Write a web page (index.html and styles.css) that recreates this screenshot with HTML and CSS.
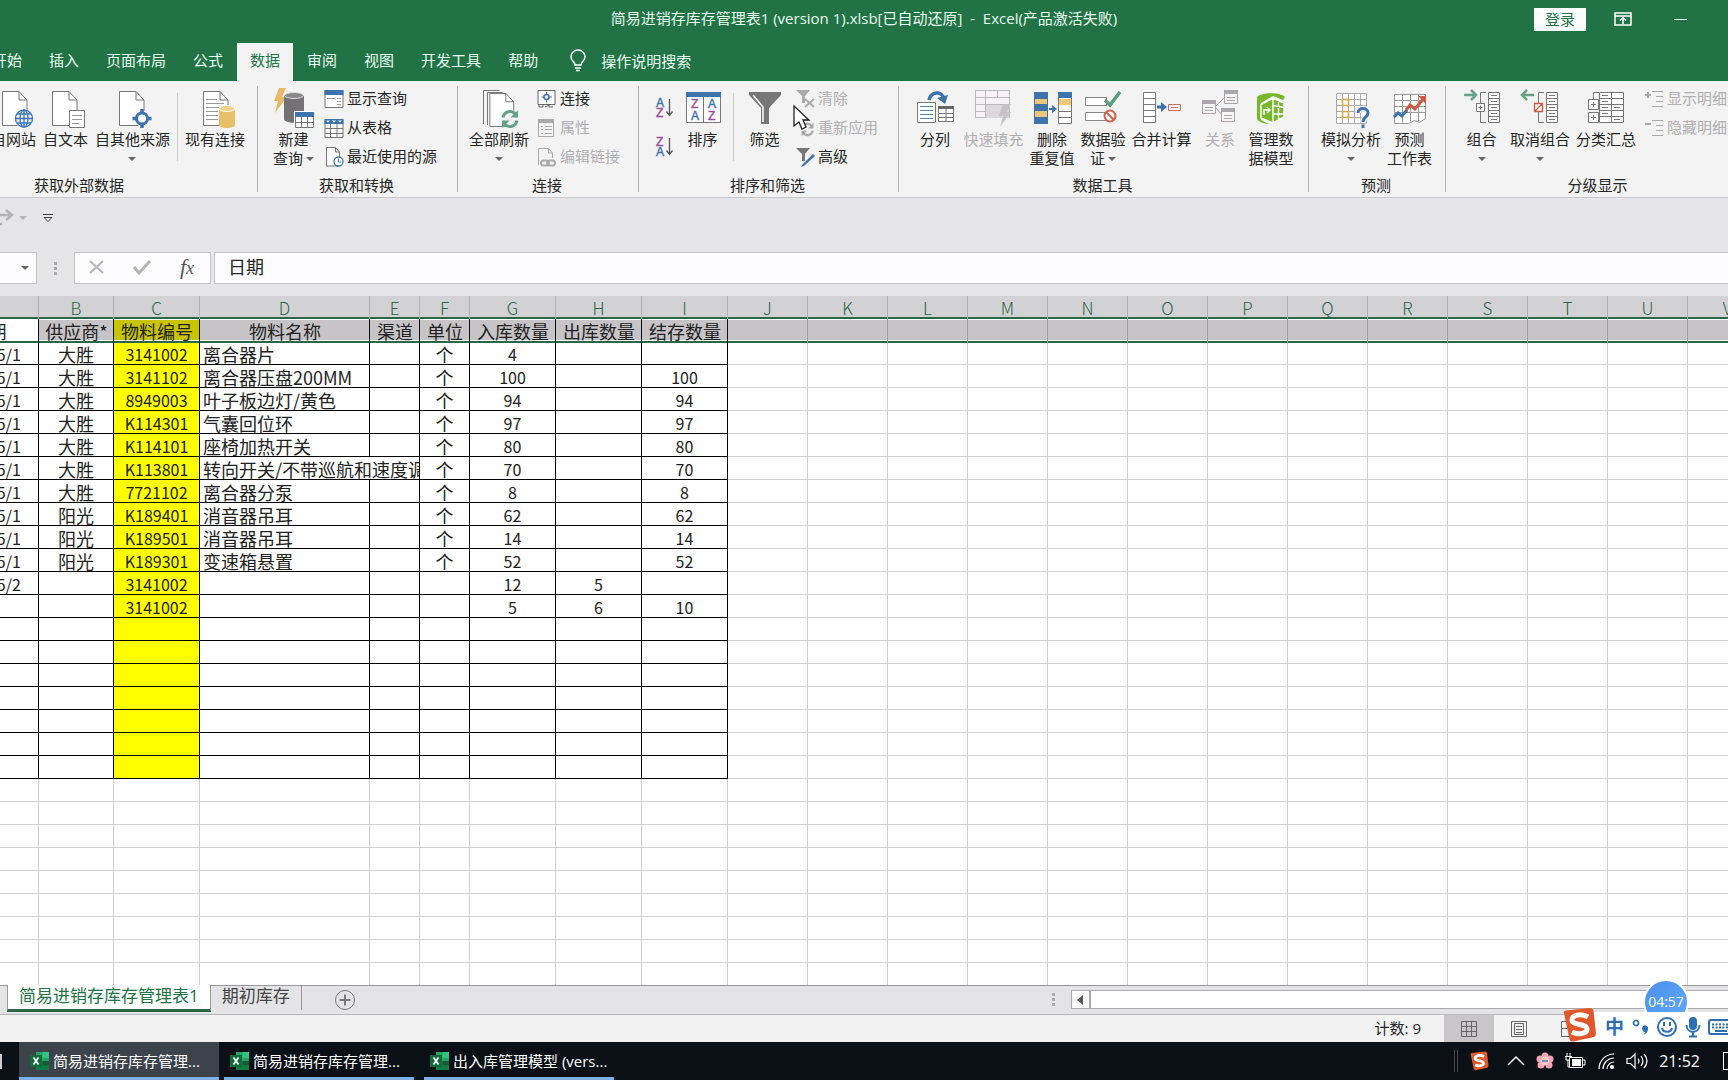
FILE: index.html
```html
<!DOCTYPE html>
<html lang="zh-CN">
<head>
<meta charset="utf-8">
<title>简易进销存库存管理表1 - Excel</title>
<link rel="stylesheet" href="styles.css">
</head>
<body>
<svg class="defs" aria-hidden="true">
  <symbol id="doc" viewBox="0 0 26 35"><path d="M.5.5H17L25 9V34.500H.5Z" fill="#fff" stroke="#777"/><path d="M17 .5V9H25" fill="none" stroke="#777"/></symbol>
  <symbol id="cycle" viewBox="0 0 20 20"><path d="M3 8.500A7.200 7.200 0 0 1 15.500 5M17 11.500A7.200 7.200 0 0 1 4.500 15" fill="none" stroke="currentColor" stroke-width="3"/><path d="M18 1V8.500H10.500ZM2 19V11.500H9.500Z" fill="currentColor"/></symbol>
  <symbol id="sogou" viewBox="0 0 36 34"><path d="M3 5 Q2 3 5 2.500L29 0Q32 0 32.500 3L35 25Q35 28 33 29L12 33.500Q9 34 8.500 31Z" fill="#e2582c"/><path d="M27 9C20 5 11 7 11 12c0 6 15 3 15 9 0 5-9 6-15 3" fill="none" stroke="#fff" stroke-width="5"/></symbol>
  <symbol id="xl" viewBox="0 0 20 20"><path d="M6 1h13v18H6z" fill="#21a366"/><path d="M12.500 1H19v6h-6.500z" fill="#33c481"/><path d="M6 10h13v9H6z" fill="#107c41"/><path d="M12.500 10H19v4.500h-6.500z" fill="#185c37"/><path d="M0 4h12v12H0z" fill="#0f6b39"/><path d="M3.500 6.500l5 7M8.500 6.500l-5 7" stroke="#fff" stroke-width="1.700"/></symbol>
</svg>

<header class="titlebar">
  <span class="spacer"></span>
  <h1 class="title">简易进销存库存管理表1 (version 1).xlsb[已自动还原]&nbsp; -&nbsp; Excel(产品激活失败)</h1>
  <div class="wincontrols">
    <button class="login">登录</button>
    <button class="winbtn" aria-label="功能区显示选项"><svg width="18" height="14"><path d="M1 1h16v12H1zM1 4h16" fill="none" stroke="#fff" stroke-width="1.500"/><path d="M9 12V6M6 8.500l3-3 3 3" fill="none" stroke="#fff" stroke-width="1.500"/></svg></button>
    <button class="winbtn" aria-label="最小化"><svg width="14" height="14"><path d="M0 7.500h13" stroke="#fff"/></svg></button>
  </div>
</header>

<nav class="tabs">
  <button class="tab">开始</button><button class="tab">插入</button><button class="tab">页面布局</button><button class="tab">公式</button><button class="tab active">数据</button><button class="tab">审阅</button><button class="tab">视图</button><button class="tab">开发工具</button><button class="tab">帮助</button>
  <button class="tellme"><svg width="16" height="22" fill="none" stroke="#fff" stroke-width="1.500"><path d="M5 15c0-3-4-4-4-8a7 7 0 0 1 14 0c0 4-4 5-4 8zM5 18h6M6 20.500h4"/></svg>操作说明搜索</button>
</nav>

<section class="ribbon">
  <div class="group g-ext">
    <div class="tools">
      <button class="big"><svg class="ico" viewBox="0 0 40 40"><use href="#doc" x="9" y="3" width="26" height="35"/><circle cx="31" cy="30.500" r="9.500" fill="#f3f3f3"/><g fill="none" stroke="#3e78b2" stroke-width="1.300"><circle cx="31" cy="30.500" r="8.500"/><ellipse cx="31" cy="30.500" rx="4" ry="8.500"/><path d="M31 22v17M22.500 30.500h17M24 26h14M24 35h14"/></g></svg>自网站</button>
      <button class="big"><svg class="ico" viewBox="0 0 40 40"><use href="#doc" x="7" y="3" width="26" height="35"/><path d="M24.500 22.500h15v17h-15z" fill="#fff" stroke="#777"/><path d="M27 27.500h10M27 31.500h10M27 35.500h7" stroke="#999"/></svg>自文本</button>
      <button class="big"><svg class="ico" viewBox="0 0 40 40"><use href="#doc" x="7" y="3" width="26" height="35"/><circle cx="30" cy="30.500" r="8" fill="#f3f3f3"/><circle cx="30" cy="30.500" r="5.500" fill="#fff" stroke="#3e73ad" stroke-width="3"/><path d="M30 21v4M30 36v4M20.500 30.500h4M35.500 30.500h4" stroke="#3e73ad" stroke-width="3.500"/></svg>自其他来源<i class="caret"></i></button>
      <span class="rule"></span>
      <button class="big"><svg class="ico" viewBox="0 0 40 40"><use href="#doc" x="8" y="3" width="26" height="35"/><path d="M11 11.500h11M11 15.500h18M11 19.500h13M11 23.500h12M11 27.500h12M11 31.500h12" stroke="#999"/><path d="M24 21v16c0 4 16 4 16 0V21z" fill="#e8c068"/><ellipse cx="32" cy="20.500" rx="8" ry="3" fill="#eed086" stroke="#fff"/></svg>现有连接</button>
    </div>
    <h2 class="gtitle">获取外部数据</h2>
  </div>

  <div class="group g-get">
    <div class="tools">
      <button class="big"><svg class="ico" viewBox="0 0 40 40"><path d="M5 0h7L8 9h5L1 25l3-12H0z" fill="#eab968"/><path d="M10 8v23c0 5 20 5 20 0V8z" fill="#737173"/><ellipse cx="20" cy="7.500" rx="9.500" ry="3" fill="#8a888a" stroke="#ddd"/><path d="M20 23h20v17H20z" fill="#fff"/><path d="M21.500 24.500h18v15h-18zM21.500 34.500h18M27.500 28v11M33.500 28v11" fill="none" stroke="#777"/><path d="M21 24h19v5H21z" fill="#3e73ad"/></svg>新建<span>查询<i class="caret in"></i></span></button>
      <ul class="small">
        <li><button><svg viewBox="0 0 20 20"><path d="M1 1.500h18v17H1z" fill="#fff" stroke="#777"/><path d="M.5 1h19v5H.5z" fill="#3e73ad"/><path d="M3 9.500h8M13 9.500h4M13 12.500h4M13 15.500h4" stroke="#999"/></svg>显示查询</button></li>
        <li><button><svg viewBox="0 0 20 20"><path d="M1 1.500h18v18H1zM1 10.500h18M1 15.500h18M6.500 6v13M13 6v13" fill="#fff" stroke="#777"/><path d="M.5 1h19v5H.5z" fill="#3e73ad"/><path d="M2 2.500h4l-2 2zM8 2.500h4l-2 2zM14 2.500h4l-2 2z" fill="#fff"/></svg>从表格</button></li>
        <li><button><svg viewBox="0 0 20 20"><path d="M2.500.5h9l4 4.500v14h-13zM11.500.5V5h4" fill="#fff" stroke="#777"/><circle cx="14.500" cy="14.500" r="4.500" fill="#fff" stroke="#3e73ad" stroke-width="1.300"/><path d="M14.500 11.500v3.500h2.500" fill="none" stroke="#3e73ad"/></svg>最近使用的源</button></li>
      </ul>
    </div>
    <h2 class="gtitle">获取和转换</h2>
  </div>

  <div class="group g-conn">
    <div class="tools">
      <button class="big"><svg class="ico" viewBox="0 0 40 40"><path d="M4.500 36V2.500h16M8.500 37V4.500h15" fill="none" stroke="#777"/><use href="#doc" x="10" y="5" width="26" height="34"/><circle cx="31" cy="30.500" r="9" fill="#f3f3f3"/><use href="#cycle" x="21" y="21" width="20" height="20" color="#65a288"/></svg>全部刷新<i class="caret"></i></button>
      <ul class="small">
        <li><button><svg viewBox="0 0 20 20"><path d="M1 1.500h17v14H1z" fill="#fff" stroke="#666"/><circle cx="9.500" cy="8" r="2.500" fill="none" stroke="#3e73ad" stroke-width="1.500"/><path d="M9.500 3v2.500M9.500 10.500v3M4.500 8H7M12 8h3" fill="none" stroke="#3e73ad"/><path d="M2 16v2h4v-2M8 18l4-2v2h4" fill="none" stroke="#666"/></svg>连接</button></li>
        <li><button disabled><svg viewBox="0 0 20 20"><path d="M1.500 1.500h15v17h-15z" fill="#f5f5f5" stroke="#aaa"/><path d="M1 1h16v4H1z" fill="#aaa"/><path d="M4 8.500h2M4 11.500h2M4 15.500h2M8 8.500h7M8 11.500h7M8 15.500h7" stroke="#aaa"/></svg>属性</button></li>
        <li><button disabled><svg viewBox="0 0 20 20" fill="none" stroke="#aaa"><path d="M1.500 18V1.500h10l4 4.500v5M11.500 1.500V6h4"/><rect x="4" y="13.500" width="8" height="5" rx="2.500" stroke-width="2"/><rect x="10" y="13.500" width="8" height="5" rx="2.500" stroke-width="2"/></svg>编辑链接</button></li>
      </ul>
    </div>
    <h2 class="gtitle">连接</h2>
  </div>

  <div class="group g-sort">
    <div class="tools">
      <div class="sorts">
        <button aria-label="升序"><svg width="18" height="22"><text class="az b" x="0" y="10">A</text><text class="az p" x="0" y="20">Z</text><path d="M13.500 2v16M10.500 14.500l3 4 3-4" fill="none" stroke="#555" stroke-width="1.300"/></svg></button>
        <button aria-label="降序"><svg width="18" height="22"><text class="az p" x="0" y="10">Z</text><text class="az b" x="0" y="20">A</text><path d="M13.500 2v16M10.500 14.500l3 4 3-4" fill="none" stroke="#555" stroke-width="1.300"/></svg></button>
      </div>
      <button class="big"><svg class="ico" viewBox="0 0 40 40"><path d="M3.500 4.500h34v30h-34zM20.500 9v26" fill="#fff" stroke="#777"/><path d="M3 4h35v5H3z" fill="#3e73ad"/><text class="az p" x="8" y="20">Z</text><text class="az b" x="8" y="32">A</text><text class="az b" x="25" y="20">A</text><text class="az p" x="25" y="32">Z</text></svg>排序</button>
      <span class="rule"></span>
      <button class="big"><svg class="ico" viewBox="0 0 40 40"><path d="M4 4h32v3L24 20v16h-8V20L4 7z" fill="#777"/><path d="M8 7l10 12v15" fill="none" stroke="#fff" stroke-width="1.500"/></svg>筛选</button>
      <ul class="small">
        <li><button disabled><svg viewBox="0 0 20 20"><path d="M1 1h14l-5 6v7H7V7z" fill="#aaa"/><path d="M10 10l9 8M19 10l-9 8" stroke="#aaa" stroke-width="2"/></svg>清除</button></li>
        <li><button disabled><svg viewBox="0 0 20 20"><use href="#cycle" x="5" y="4" width="15" height="15" color="#aaa"/></svg>重新应用</button></li>
        <li><button><svg viewBox="0 0 20 20"><path d="M1 1h14l-5 6v7H7V7z" fill="#777"/><path d="M18 7l-10 10-2 3 3.500-1.500L20 9z" fill="#3e73ad"/></svg>高级</button></li>
      </ul>
    </div>
    <h2 class="gtitle">排序和筛选</h2>
    <svg class="cursor" width="18" height="26"><path d="M1 1v20l5-4 3 7 4-2-3-7h6z" fill="#fff" stroke="#222" stroke-width="1.300"/></svg>
  </div>

  <div class="group g-data">
    <div class="tools">
      <button class="big"><svg class="ico" viewBox="0 0 40 40"><path d="M2.500 14.500h18v20h-18z" fill="#fff" stroke="#777"/><path d="M5 18.500h13M5 22.500h13M5 26.500h13M5 30.500h13" stroke="#4d86a8"/><path d="M23.500 18.500h15v15h-15zM31 18v15M23.500 25.500h15M23.500 29.500h15" fill="#fff" stroke="#777"/><path d="M23 18h16v3H23z" fill="#666"/><path d="M14 12C16 3 27 3 28.500 10" fill="none" stroke="#3e73ad" stroke-width="3.500"/><path d="M22 10l11-3-3 9z" fill="#3e73ad"/></svg>分列</button>
      <button class="big" disabled><svg class="ico" viewBox="0 0 40 40"><path d="M2.500 2.500h34v27h-34zM2.500 9.500h34M2.500 16.500h34M2.500 23.500h34M12.500 2.500v27M24.500 2.500v7" fill="#f6f2f6" stroke="#bdb8bd"/><path d="M13 17h23v13H13z" fill="#dcd8dc"/><path d="M30 16h8l-4 8h4L27 39l3-11h-4z" fill="#c6c2c6"/></svg>快速填充</button>
      <button class="big"><svg class="ico" viewBox="0 0 40 40"><path d="M2 4h14v32H2z" fill="#3e73ad"/><path d="M3 11h12v5H3zM3 23h12v6H3z" fill="#ecc778"/><path d="M26.500 4.500h13v31h-13zM26.500 23.500h13M26.500 29.500h13" fill="#fff" stroke="#777"/><path d="M26 4h14v6H26z" fill="#3e73ad"/><path d="M27 11h12v6H27z" fill="#ecc778"/><path d="M17 21h5" stroke="#3e73ad" stroke-width="2"/><path d="M20 17l5 4-5 4z" fill="#3e73ad"/></svg>删除<span>重复值</span></button>
      <button class="big"><svg class="ico" viewBox="0 0 40 40"><path d="M2.500 9.500h21v8h-21zM2.500 24.500h21v8h-21z" fill="#fff" stroke="#888"/><path d="M22 12l5 5 10-13" fill="none" stroke="#5c9c80" stroke-width="3.500"/><circle cx="27" cy="28" r="5.500" fill="#f3f3f3" stroke="#cb6152" stroke-width="2"/><path d="M23 24l8 8" stroke="#cb6152" stroke-width="2"/></svg>数据验<span>证<i class="caret in"></i></span></button>
      <button class="big"><svg class="ico" viewBox="0 0 40 40"><path d="M1.500 4.500h12v30h-12zM1.500 10.500h12M1.500 16.500h12M1.500 22.500h12M1.500 28.500h12" fill="#fff" stroke="#777"/><path d="M15 19h6" stroke="#3e73ad" stroke-width="3"/><path d="M19 14l6 5-6 5z" fill="#3e73ad"/><path d="M26.500 16.500h12v6h-12zM29 19.500h7" fill="#fff" stroke="#cb6f62"/></svg>合并计算</button>
      <button class="big" disabled><svg class="ico" viewBox="0 0 40 40"><path d="M16 18l8-8M16 20l6 7" stroke="#aaa"/><g fill="#f8f4f8" stroke="#aaa6aa"><path d="M2.500 12.500h13v13h-13zM24.500 2.500h13v13h-13zM21.500 20.500h13v13h-13zM5 19.500h8M5 22.500h8M27 9.500h8M27 12.500h8M24 27.500h8M24 30.500h8"/></g><path d="M2 12h14v4H2zM24 2h14v4H24zM21 20h14v4H21z" fill="#aaa6aa"/></svg>关系</button>
      <button class="big"><svg class="ico" viewBox="0 0 40 40"><path d="M6 9c5-5 23-5 28 0l-2 3-10-4-12 7v17l8 4c-6 0-11-3-12-5z" fill="#76b82a"/><path d="M10 16l12-6 11 5v14l-11 6-12-5z" fill="#76b82a"/><path d="M10 16.500l12-6.500 11 5v14l-11 6-12-5zM22 10v25M27.500 12.500v19.500M22 17.500l11 2M22 26h11M13 27v-5h5M16 19l3 3-3 3" fill="none" stroke="#fff" stroke-width="1.500"/></svg>管理数<span>据模型</span></button>
    </div>
    <h2 class="gtitle">数据工具</h2>
  </div>

  <div class="group g-fore">
    <div class="tools">
      <button class="big"><svg class="ico" viewBox="0 0 40 40"><path d="M5.500 5.500h30v30h-30zM5.500 11.500h30M5.500 17.500h30M5.500 23.500h30M5.500 29.500h30M11.500 5.500v30M17.500 5.500v30M23.500 5.500v30M29.500 5.500v30" fill="#fff" stroke="#aaa"/><path d="M11.500 11.500h6v6h-6zM11.500 23.500h6v6h-6z" fill="none" stroke="#dba744" stroke-width="1.500"/><path d="M27 25c0-6 10-6 10 0 0 4-5 4-5 9M32 36.500v3.500" fill="none" stroke="#f3f3f3" stroke-width="6"/><path d="M27 25c0-6 10-6 10 0 0 4-5 4-5 9M32 36.500v3.500" fill="none" stroke="#3e73ad" stroke-width="3"/></svg>模拟分析<i class="caret"></i></button>
      <button class="big"><svg class="ico" viewBox="0 0 40 40"><path d="M4.500 6.500h31v24l-6 4-5-2-6 3H4.500zM4.500 12.500h31M4.500 18.500h31M4.500 24.500h31M12.500 6.500v28M20.500 6.500v27M28.500 6.500v27" fill="#fff" stroke="#999"/><path d="M4 29l4-4 4 3 5-6" fill="none" stroke="#3e73ad" stroke-width="3"/><path d="M16 22l4-5 5 4 9-11" fill="none" stroke="#d05a42" stroke-width="3"/><path d="M28 8h8v8z" fill="#d05a42"/></svg>预测<span>工作表</span></button>
    </div>
    <h2 class="gtitle">预测</h2>
  </div>

  <div class="group g-outline">
    <div class="tools">
      <button class="big"><svg class="ico" viewBox="0 0 40 40"><path d="M26.500 4.500h11v30h-11z" fill="#fff"/><path d="M26.500 4.500h11v30h-11zM26.500 10.500h11M26.500 16.500h11M26.500 22.500h11M26.500 28.500h11M29 7.500h6M29 13.500h6M29 19.500h6M29 25.500h6M29 31.500h6M24 4.500h-5.500v11M18.500 24v10.500H24" fill="none" stroke="#777"/><path d="M14.500 15.500h8v8h-8zM16.500 19.500h4M18.500 17.500v4" fill="#fff" stroke="#777"/><path d="M2 7h11M9 2l5 5-5 5" fill="none" stroke="#65a288" stroke-width="2.500"/></svg>组合<i class="caret"></i></button>
      <button class="big"><svg class="ico" viewBox="0 0 40 40"><path d="M26.500 4.500h11v30h-11z" fill="#fff"/><path d="M26.500 4.500h11v30h-11zM26.500 10.500h11M26.500 16.500h11M26.500 22.500h11M26.500 28.500h11M29 7.500h6M29 13.500h6M29 19.500h6M29 25.500h6M29 31.500h6M24 4.500h-5.500v11M18.500 24v10.500H24" fill="none" stroke="#777"/><path d="M14.500 15.500h8v8h-8zM15 23l7-7" fill="#fff" stroke="#d05a42" stroke-width="1.300"/><path d="M3 7h11M7 2L2 7l5 5" fill="none" stroke="#65a288" stroke-width="2.500"/></svg>取消组合<i class="caret"></i></button>
      <button class="big"><svg class="ico" viewBox="0 0 40 40"><path d="M13.500 4.500h24v30h-24zM13.500 10.500h24M13.500 16.500h24M13.500 22.500h24M13.500 28.500h24M25.500 4.500v30M16 7.500h6M16 13.500h6M16 19.500h6M16 25.500h6M28 19.500h6M28 31.500h6M13 4.500H7.500v7" fill="#fff" stroke="#777"/><path d="M2.500 11.500h10v10h-10zM2.500 24.500h10v10h-10zM5 16.500h5M7.500 14v5M5 29.500h5M7.500 27v5" fill="#fff" stroke="#777"/></svg>分类汇总</button>
      <ul class="small">
        <li><button disabled><svg viewBox="0 0 20 20"><path d="M1 6h6M4 3v6" stroke="#aaa" stroke-width="2"/><path d="M8 2.500h11M12 7.500h7M12 12.500h7M8 17.500h11" stroke="#aaa"/></svg>显示明细数据</button></li>
        <li><button disabled><svg viewBox="0 0 20 20"><path d="M1 6h6" stroke="#aaa" stroke-width="2"/><path d="M8 2.500h11M12 7.500h7M12 12.500h7M8 17.500h11" stroke="#aaa"/></svg>隐藏明细数据</button></li>
      </ul>
    </div>
    <h2 class="gtitle">分级显示</h2>
  </div>
</section>

<div class="qat">
  <button aria-label="恢复"><svg width="14" height="18"><path d="M0 6h10M6 1l6 5-6 5M0 15h2" fill="none" stroke="#b3b3b5" stroke-width="2.500"/></svg></button>
  <button aria-label="恢复选项"><i class="caret pale"></i></button>
  <button aria-label="自定义快速访问工具栏"><svg width="10" height="10" fill="none" stroke="#444"><path d="M0 1.500h10M1 4.500l4 4 4-4z"/></svg></button>
</div>

<div class="formula">
  <div class="namebox"><input aria-label="名称框" value=""><button aria-label="名称列表"><i class="caret"></i></button></div>
  <span class="grip"></span>
  <div class="fxbox">
    <button aria-label="取消"><svg width="16" height="16"><path d="M1 2l13 12M14 2L1 14" stroke="#b5b5b5" stroke-width="2"/></svg></button>
    <button aria-label="输入"><svg width="18" height="16"><path d="M1 8l5 6L17 2" fill="none" stroke="#b5b5b5" stroke-width="3"/></svg></button>
    <button class="fx" aria-label="插入函数">f<small>x</small></button>
  </div>
  <input class="finput" aria-label="编辑栏" value="日期">
</div>

<main class="sheet"><table class="grid" id="grid"></table></main>

<div class="sheetbar">
  <button class="stab active">简易进销存库存管理表1</button>
  <button class="stab">期初库存</button>
  <button class="addsheet" aria-label="新工作表"><svg width="22" height="22" fill="none" stroke="#777"><circle cx="11" cy="11" r="9.500"/><path d="M5.500 11h11M11 5.500v11" stroke-width="2"/></svg></button>
  <span class="grip"></span>
  <div class="hscroll"><button aria-label="向左滚动"><svg width="6" height="10"><path d="M6 0v10L0 5z" fill="#555"/></svg></button></div>
</div>

<footer class="status">
  <span class="count">计数: 9</span>
  <button class="view on" aria-label="普通"><svg width="18" height="18"><path d="M1.500 1.500h15v15h-15zM6.500 1.500v15M11.500 1.500v15M1.500 6.500h15M1.500 11.500h15" fill="none" stroke="#666"/></svg></button>
  <button class="view" aria-label="页面布局"><svg width="18" height="18"><path d="M1.500 1.500h15v15h-15zM4.500 3.500h9v11h-9zM6 6.500h6M6 9.500h6M6 12.500h6" fill="none" stroke="#666"/></svg></button>
  <button class="view" aria-label="分页预览"><svg width="18" height="18"><path d="M1.500 1.500h15v15h-15zM1.500 8.500h9v8" fill="none" stroke="#666"/></svg></button>
</footer>

<div class="timer">04:57</div>
<div class="ime">
  <svg class="imelogo" width="36" height="34"><use href="#sogou"/></svg>
  <button>中</button>
  <button aria-label="标点"><svg width="18" height="20"><circle cx="5" cy="6" r="2.500" fill="none" stroke="#2d6fb0" stroke-width="1.700"/><path d="M11 11a3 3 0 0 1 6 1c0 3-2 5-5 6 1-1 2-2 2-3-2 0-3-2-3-4z" fill="#2d6fb0"/></svg></button>
  <button aria-label="表情"><svg width="22" height="22" fill="none" stroke="#2d6fb0" stroke-width="2"><circle cx="11" cy="11" r="9"/><path d="M8 6v4M14 6v4M6 12c1 5 9 5 10 0"/></svg></button>
  <button aria-label="语音"><svg width="16" height="22"><rect x="4" y="1" width="8" height="13" rx="4" fill="#2d6fb0"/><path d="M1.500 9c0 9 13 9 13 0M8 16v4M4 20.500h8" fill="none" stroke="#2d6fb0" stroke-width="2"/></svg></button>
  <button aria-label="键盘"><svg width="26" height="16"><rect x="1" y="1" width="24" height="14" rx="2" fill="none" stroke="#2d6fb0" stroke-width="2"/><path d="M4 5.500h18M4 8.500h18" stroke="#2d6fb0" stroke-width="2" stroke-dasharray="2 1.500"/><path d="M7 12h12" stroke="#2d6fb0" stroke-width="2"/></svg></button>
</div>

<div class="taskbar">
  <span class="tview"></span>
  <button class="task on"><svg width="20" height="20"><use href="#xl"/></svg>简易进销存库存管理...</button>
  <button class="task"><svg width="20" height="20"><use href="#xl"/></svg>简易进销存库存管理...</button>
  <button class="task"><svg width="20" height="20"><use href="#xl"/></svg>出入库管理模型 (vers...</button>
  <div class="tray">
    <span class="tsep"></span>
    <svg class="traylogo" width="20" height="20"><use href="#sogou"/></svg>
    <svg width="18" height="12"><path d="M1 10l8-8 8 8" fill="none" stroke="#fff" stroke-width="1.500"/></svg>
    <svg width="18" height="18"><g fill="#f3a6b4"><circle cx="9" cy="4" r="3.500"/><circle cx="4" cy="7" r="3.500"/><circle cx="14" cy="7" r="3.500"/><circle cx="5" cy="13" r="3.500"/><circle cx="13" cy="13" r="3.500"/></g><circle cx="9" cy="9" r="4.500" fill="#f8c9cf"/><path d="M6 9h6" stroke="#7893b0" stroke-width="2"/></svg>
    <svg width="21" height="16"><path d="M4.500 4.500h13v10h-13zM18 7h2v5h-2M2 0v3M5 0v3M0 3.500h7M1 4v3h4M3 7v7h2" fill="none" stroke="#fff"/><path d="M7 6h9v7H7z" fill="#fff"/></svg>
    <svg width="18" height="18" fill="none" stroke="#fff" stroke-width="1.200"><path d="M2 17A15 15 0 0 1 17 2M6 17A11 11 0 0 1 17 6M10 17a7 7 0 0 1 7-7"/><circle cx="15" cy="15" r="1.500" fill="#fff"/></svg>
    <svg width="22" height="18" fill="none" stroke="#fff" stroke-width="1.200"><path d="M1 6.500h3.500L9 2v14l-4.500-4.500H1zM12 6.500q2 2.500 0 5M15 4q4 5 0 10M18 2q6 7 0 14"/></svg>
    <time>21:52</time>
    <span class="notif"></span>
  </div>
</div>
<script src="app.js"></script>
</body>
</html>
```
FILE: styles.css
```css
* { box-sizing: border-box; }
body {
  margin: 0; height: 100vh; min-height: 720px; overflow: hidden; position: relative;
  display: flex; flex-direction: column;
  font: 15px/19px "Open Sans", "Noto Sans CJK SC", sans-serif; color: #262626; background: #e6e6e8;
}
button, input { font: inherit; color: inherit; border: 0; padding: 0; background: none; }
button { white-space: nowrap; }
h1, h2, ul { margin: 0; padding: 0; font: inherit; list-style: none; }
svg { display: block; flex: none; overflow: visible; }
.defs { position: absolute; width: 0; height: 0; }

.titlebar { flex: none; height: 43px; background: #217346; color: #e8fbee; display: grid; grid-template-columns: 1fr auto 1fr; }
.title { line-height: 36px; white-space: pre; }
.wincontrols { display: flex; justify-content: flex-end; align-items: center; height: 38px; padding-right: 40px; }
.login { width: 52px; height: 23px; background: #fff; color: #217346; }
.winbtn { margin-left: 28px; }
.winbtn:last-child { margin-left: 42px; }

.tabs { flex: none; height: 38px; background: #217346; display: flex; gap: 1px; margin-left: -21px; color: #e8fbee; }
.tab { flex: none; padding: 0 13px 3px; }
.tab.active { background: #f3f3f3; color: #217346; }
.tellme { display: flex; align-items: center; gap: 15px; margin-left: 18px; padding-bottom: 2px; }

.ribbon { flex: none; height: 117px; background: #f3f3f3; border-bottom: 1px solid #c9c9cb; display: flex; overflow: hidden; }
.group { flex: none; position: relative; padding-top: 7px; display: flex; flex-direction: column; }
.group::after { content: ""; position: absolute; right: 0; top: 5px; bottom: 5px; width: 1px; background: #b4b4b6; }
.tools { display: flex; gap: 6px; height: 88px; align-items: flex-start; }
.gtitle { text-align: center; padding-right: 3px; }
.g-ext { width: 355px; margin-left: -97px; }
.g-ext .tools { justify-content: flex-end; gap: 7px; padding-right: 13px; }
.g-get { width: 200px; }
.g-get .tools { padding-left: 13px; }
.g-conn { width: 181px; }
.g-conn .tools { padding-left: 11px; }
.g-sort { width: 260px; }
.g-sort .tools { padding-left: 17px; gap: 8px; }
.g-data { width: 410px; }
.g-fore { width: 137px; }
.g-data .tools, .g-fore .tools { justify-content: center; padding-right: 2px; }
.g-outline { width: 306px; }
.g-outline .tools { padding-left: 13px; }
.big { flex: none; min-width: 45px; display: flex; flex-direction: column; align-items: center; line-height: 19px; }
.ico { width: 40px; height: 40px; margin-bottom: 2px; }
.big > span { display: flex; align-items: center; gap: 3px; }
.caret { width: 0; height: 0; border: 4px solid transparent; border-top-color: #666; border-bottom: 0; }
.big > .caret { margin-top: 8px; }
.pale { display: block; border-top-color: #b5b5b7; }
button:disabled { color: #b1afb1; }
.rule { width: 1px; height: 68px; margin-top: 5px; background: #cdcdcf; }
.small { margin-left: 2px; margin-top: -4px; }
.g-sort .small { margin-left: 0; }
.small button { display: flex; align-items: center; gap: 3px; height: 29px; }
.small svg { width: 20px; height: 20px; }
.sorts { display: flex; flex-direction: column; gap: 17px; padding-top: 9px; width: 16px; }
.az { font: 12px "Liberation Sans", sans-serif; stroke-width: 0.4px; }
.b { fill: #3e73ad; stroke: #3e73ad; }
.p { fill: #9a4f9e; stroke: #9a4f9e; }
.cursor { position: absolute; left: 154px; top: 24px; }

.qat { flex: none; height: 54px; display: flex; align-items: flex-start; padding-top: 15px; }
.qat button { height: 10px; display: flex; align-items: center; }
.qat button + button { margin-left: 5px; }
.qat button:last-child { margin-left: 16px; }

.formula { flex: none; height: 44px; display: flex; align-items: flex-start; }
.namebox, .fxbox, .finput { height: 32px; background: #fdfcfe; border: 1px solid #c4c4c6; }
.namebox { width: 37px; border-left: 0; display: flex; align-items: center; }
.namebox input { width: 21px; }
.namebox .caret { display: block; }
.grip { width: 3px; height: 13px; background: repeating-linear-gradient(#aaa 0 3px, transparent 3px 5px); }
.formula .grip { margin: 10px 17px; }
.fxbox { width: 137px; display: flex; align-items: center; justify-content: space-between; padding: 0 16px 2px 14px; }
.fx { font: italic 22px/28px "Liberation Serif", serif; color: #555; }
.fx small { font-size: 18px; }
.finput { flex: 1; min-width: 0; margin-left: 3px; border-right: 0; padding: 0 13px 4px; font-size: 18px; }

.sheet { flex: 1; min-height: 0; overflow: hidden; background: #fff; }
.grid { table-layout: fixed; width: 100%; border-spacing: 0; margin-left: -62px; font-size: 18px; line-height: 20px; color: #222; font-family: "Noto Sans CJK SC", sans-serif; }
.grid th { height: 23px; padding: 0; background: #d2d1d3; border-right: 1px solid #b0b0b2; box-shadow: inset 0 -2px #2a6647; font-weight: 300; color: #2a6647; font-size: 17px; }
.grid td { height: 23px; padding: 1px 3px 0; border-right: 1px solid #d0d0d0; border-bottom: 1px solid #d0d0d0; text-align: center; white-space: nowrap; overflow: hidden; }
.grid .box { border-color: #000; }
.grid .left { text-align: left; }
.grid .num { font-size: 16px; }
.grid .code { background: #ff0; }
.grid .sel td { height: 24px; padding: 0 0 1px 1px; border-bottom: 0; background: #c6c4c6; box-shadow: inset 0 1px #fff, inset 0 -2px #2a6647, inset 0 -3px #fff; border-right-color: #a2a0a2; line-height: 20px; }
.grid .sel td.box { border-right-color: #111; }
.grid .sel td:first-child { background: #fff; }
.grid .sel .code { background: #c9c400; }
.grid .first td { height: 22px; padding-top: 0; }
.a { width: 101px; }
.w75 { width: 75px; }
.w86 { width: 86px; }
.w170 { width: 170px; }
.w50 { width: 50px; }
.w80 { width: 80px; }

.sheetbar { flex: none; height: 30px; display: flex; align-items: flex-start; background: #e4e4e6; border-top: 1px solid #999; border-bottom: 1px solid #b8b8ba; padding-left: 7px; font-size: 17px; }
.stab { height: 24px; padding: 0 11px 4px; border-right: 1px solid #999; color: #444; line-height: 20px; }
.stab.active { height: 27px; margin-top: -1px; padding-bottom: 3px; background: #fff; color: #217346; border-left: 1px solid #999; border-bottom: 3px solid #2a6647; }
.addsheet { margin: 3px auto 0 32px; }
.sheetbar .grip { margin: 7px 16px 0 0; }
.hscroll { flex: none; width: 38.2%; height: 19px; margin-top: 4px; background: #fff; border: 1px solid #aaa; border-right: 0; }
.hscroll button { display: block; width: 19px; height: 17px; border-right: 2px solid #aaa; padding-left: 5px; }

.status { flex: none; height: 27px; background: #f2f2f2; display: flex; align-items: center; justify-content: flex-end; padding-right: 134px; }
.count { margin-right: 23px; }
.view { width: 50px; height: 27px; display: flex; align-items: center; justify-content: center; }
.view.on { background: #c8c6c8; }

.timer { position: absolute; right: 39px; bottom: 55px; width: 46px; height: 46px; border-radius: 50%; border: 2px solid #fff; background: linear-gradient(135deg, #4a90ee, #62a9fb); color: #fff; text-align: center; line-height: 42px; font-size: 14px; }
.ime { position: absolute; right: 0; bottom: 38px; height: 30px; padding-left: 33px; background: #fff; display: flex; align-items: center; gap: 7px; color: #2d6fb0; font-size: 19px; font-weight: 700; width: 156px; overflow: clip; overflow-clip-margin: 12px; }
.imelogo { position: absolute; left: -11px; top: -4px; }
.taskbar { flex: none; height: 38px; background: #0b1016; color: #fff; display: flex; }
.tview { width: 2px; height: 15px; margin: 12px 17px 0 0; background: #ccc; }
.task { position: relative; width: 200px; padding: 0 11px; display: flex; align-items: center; gap: 3px; }
.task.on { background: #3c434b; }
.task::after { content: ""; position: absolute; left: 5px; right: 5px; bottom: 0; height: 3px; background: #7cb0e6; }
.task.on::after { left: 0; right: 0; }
.tray { flex: 1; display: flex; align-items: center; justify-content: flex-end; gap: 11px; }
.traylogo { margin-right: 7px; }
.tsep { width: 4px; height: 22px; border: 1px solid #444; border-width: 0 1px; }
.tray time { font-size: 16px; }
.notif { width: 5px; height: 18px; margin-left: 12px; border: 1px solid #fff; border-right: 0; }
```
FILE: app.js
```js
// Builds the worksheet: column letters, the stock table and the empty cells around it.
const widths = ["a", "w75", "w86", "w170", "w50", "w50", "w86", "w86", "w86"];
const letters = "ABCDEFGHIJKLMNOPQRSTUV".split("");
const head = ["日期", "供应商*", "物料编号", "物料名称", "渠道", "单位", "入库数量", "出库数量", "结存数量"];
const D1 = "2020/5/1";
const data = [
  [D1, "大胜", "3141002", "离合器片", "", "个", "4", "", ""],
  [D1, "大胜", "3141102", "离合器压盘200MM", "", "个", "100", "", "100"],
  [D1, "大胜", "8949003", "叶子板边灯/黄色", "", "个", "94", "", "94"],
  [D1, "大胜", "K114301", "气囊回位环", "", "个", "97", "", "97"],
  [D1, "大胜", "K114101", "座椅加热开关", "", "个", "80", "", "80"],
  [D1, "大胜", "K113801", "转向开关/不带巡航和速度调", null, "个", "70", "", "70"],
  [D1, "大胜", "7721102", "离合器分泵", "", "个", "8", "", "8"],
  [D1, "阳光", "K189401", "消音器吊耳", "", "个", "62", "", "62"],
  [D1, "阳光", "K189501", "消音器吊耳", "", "个", "14", "", "14"],
  [D1, "阳光", "K189301", "变速箱悬置", "", "个", "52", "", "52"],
  ["2020/5/2", "", "3141002", "", "", "", "12", "5", ""],
  ["", "", "3141002", "", "", "", "5", "6", "10"],
];
const BOXED_ROWS = 19, ROWS = 40;

function row(cells, boxed, cls) {
  let html = `<tr class="${cls}">`;
  letters.forEach((_, i) => {
    const text = cells[i];
    if (text === null) return;
    const c = [];
    if (boxed && i < 9) c.push("box");
    if (boxed && i === 2) c.push("code");
    if (i === 3 && cls !== "sel") c.push("left");
    if (/^[\dK][\d/]*$/.test(text || "")) c.push("num");
    const span = cells[i + 1] === null ? ' colspan="2"' : "";
    html += `<td class="${c.join(" ")}"${span}>${text || ""}</td>`;
  });
  return html + "</tr>";
}

let html = "<colgroup>" + letters.map((_, i) => `<col class="${widths[i] || "w80"}">`).join("") + "</colgroup>";
html += "<thead><tr>" + letters.map(l => `<th scope="col">${l}</th>`).join("") + "</tr></thead><tbody>";
html += row(head, true, "sel");
for (let r = 0; r < ROWS; r++) html += row(data[r] || [], r < BOXED_ROWS, r === 0 ? "first" : "");
document.getElementById("grid").innerHTML = html + "</tbody>";
```
